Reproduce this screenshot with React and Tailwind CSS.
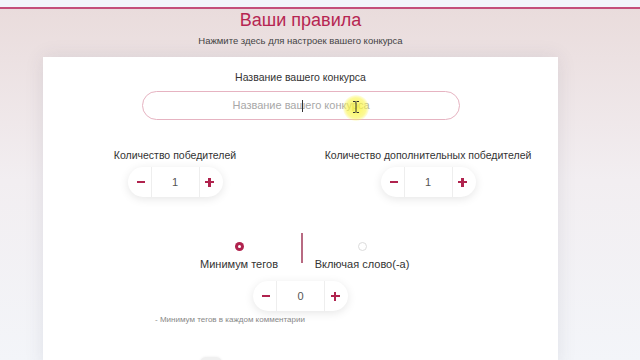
import React from "react";

const font = { fontFamily: "'Liberation Sans', Arial, sans-serif" };

function Stepper({ value }) {
  return (
    <div className="flex h-[30px] w-[95px] items-stretch rounded-full bg-white shadow-[0_2px_10px_rgba(0,0,0,0.10)]">
      <div className="flex w-[23px] items-center justify-center pl-[3px]">
        <div className="h-[2.5px] w-[8px] bg-[#b0234e]" />
      </div>
      <div className="flex flex-1 items-center justify-center border-x border-[#eeeeee] text-[11px] text-[#555]">
        {value}
      </div>
      <div className="flex w-[23px] items-center justify-center pr-[3px]">
        <div className="relative h-[9px] w-[9px]">
          <div className="absolute left-0 top-[3.25px] h-[2.5px] w-[9px] bg-[#b0234e]" />
          <div className="absolute left-[3.25px] top-0 h-[9px] w-[2.5px] bg-[#b0234e]" />
        </div>
      </div>
    </div>
  );
}

export default function App() {
  return (
    <div
      className="relative flex h-[360px] w-[640px] flex-col overflow-hidden bg-gradient-to-b from-[#e9dbdb] via-[#f2eef1] to-[#f3f5f9]"
      style={font}
    >
      <div className="h-[7px] shrink-0 bg-[#f2f6fb]" />
      <div className="h-[2px] shrink-0 bg-[#c4507a]" />
      <div className="ml-[43px] flex w-[515px] shrink-0 flex-col items-center">
        <div className="h-[22px] text-[18px] leading-[22px] text-[#b62652]">Ваши правила</div>
        <div className="mt-[3px] h-[14px] text-[9.5px] leading-[14px] text-[#444]">
          Нажмите здесь для настроек вашего конкурса
        </div>
      </div>
      <div className="ml-[43px] mt-[9px] flex w-[515px] flex-1 flex-col bg-white shadow-[0_0_18px_rgba(60,60,90,0.10)]">
        <div className="mt-[13px] text-center text-[10.5px] leading-[14px] text-[#333]">
          Название вашего конкурса
        </div>
        <div className="relative ml-[99px] mt-[7px] flex h-[29px] w-[318px] items-center justify-center rounded-full border border-[#e6b3c1] bg-white text-[11px] text-[#a8a8a8]">
          Название вашего конкурса
          <div className="absolute left-[159px] top-[8px] h-[12px] w-[1px] bg-[#333]" />
          <div className="absolute left-[200px] top-[3px] h-[26px] w-[26px] rounded-full bg-[radial-gradient(circle,rgba(250,245,60,0.85)_0%,rgba(250,245,80,0.6)_55%,rgba(250,245,80,0)_75%)]" />
          <svg className="absolute left-[209px] top-[9px]" width="8" height="12" viewBox="0 0 8 12">
            <path d="M1 0.5h2.2l0.8 0.8 0.8-0.8H7M4 1.3v9.4M1 11.5h2.2l0.8-0.8 0.8 0.8H7" fill="none" stroke="#333" strokeWidth="1" />
          </svg>
        </div>
        <div className="mt-[28px] flex">
          <div className="ml-[32px] flex w-[200px] flex-col items-center">
            <div className="text-[10.5px] leading-[14px] text-[#333]">Количество победителей</div>
            <div className="mt-[5px]">
              <Stepper value="1" />
            </div>
          </div>
          <div className="ml-[33px] flex w-[240px] flex-col items-center">
            <div className="text-[10.5px] leading-[14px] text-[#333]">
              Количество дополнительных победителей
            </div>
            <div className="mt-[5px]">
              <Stepper value="1" />
            </div>
          </div>
        </div>
        <div className="mt-[36px] flex justify-center">
          <div className="flex w-[110px] flex-col items-center pt-[9px]">
            <div className="flex h-[9px] w-[9px] items-center justify-center rounded-full bg-[#b0234e]">
              <div className="h-[3px] w-[3px] rounded-full bg-white" />
            </div>
            <div className="mt-[6px] text-[11px] leading-[14px] text-[#333]">Минимум тегов</div>
          </div>
          <div className="ml-[7px] mr-[4px] h-[30px] w-[2px] bg-[#b86a82]" />
          <div className="flex w-[110px] flex-col items-center pt-[9px]">
            <div className="h-[9px] w-[9px] rounded-full border border-[#dcdcdc] bg-white" />
            <div className="mt-[6px] text-[11px] leading-[14px] text-[#333]">Включая слово(-а)</div>
          </div>
        </div>
        <div className="mt-[10px] flex justify-center">
          <Stepper value="0" />
        </div>
        <div className="ml-[112px] mt-[3px] text-[8px] leading-[12px] text-[#888]">
          - Минимум тегов в каждом комментарии
        </div>
        <div className="ml-[157px] mt-[31px] h-[12px] w-[22px] rounded-full bg-[#f0f0f0] shadow-[0_0_3px_rgba(0,0,0,0.08)]" />
      </div>
    </div>
  );
}
